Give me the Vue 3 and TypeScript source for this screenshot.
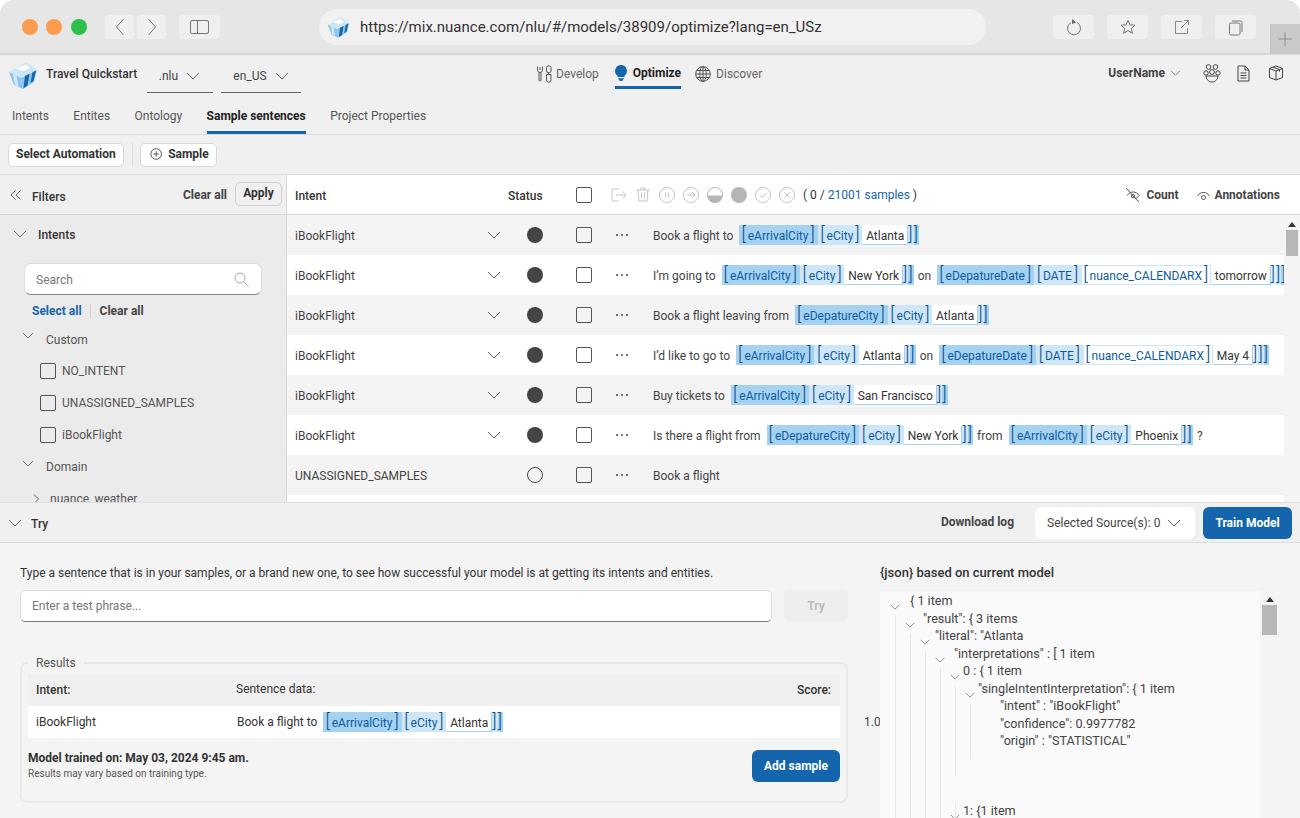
<script setup lang="ts">
interface Tag { labels: string[]; value: string }
type Part = string | Tag
interface Row { intent: string; chev: boolean; status: 'full' | 'empty' | 'none'; parts: Part[] }

const arrive = (v: string): Tag => ({ labels: ['eArrivalCity', 'eCity'], value: v })
const depart = (v: string): Tag => ({ labels: ['eDepatureCity', 'eCity'], value: v })
const date = (v: string): Tag => ({ labels: ['eDepatureDate', 'DATE', 'nuance_CALENDARX'], value: v })

const rows: Row[] = [
  { intent: 'iBookFlight', chev: true, status: 'full', parts: ['Book a flight to', arrive('Atlanta')] },
  { intent: 'iBookFlight', chev: true, status: 'full', parts: ['I’m going to', arrive('New York'), 'on', date('tomorrow')] },
  { intent: 'iBookFlight', chev: true, status: 'full', parts: ['Book a flight leaving from', depart('Atlanta')] },
  { intent: 'iBookFlight', chev: true, status: 'full', parts: ['I’d like to go to', arrive('Atlanta'), 'on', date('May 4')] },
  { intent: 'iBookFlight', chev: true, status: 'full', parts: ['Buy tickets to', arrive('San Francisco')] },
  { intent: 'iBookFlight', chev: true, status: 'full', parts: ['Is there a flight from', depart('New York'), 'from', arrive('Phoenix'), '?'] },
  { intent: 'UNASSIGNED_SAMPLES', chev: false, status: 'empty', parts: ['Book a flight'] },
  { intent: '', chev: false, status: 'none', parts: [] }
]
const resultParts: Part[] = ['Book a flight to', arrive('Atlanta')]
const isTag = (p: Part): p is Tag => typeof p !== 'string'

const tabs = ['Intents', 'Entites', 'Ontology', 'Sample sentences', 'Project Properties']
const customIntents = ['NO_INTENT', 'UNASSIGNED_SAMPLES', 'iBookFlight']

// c = chevron offset in px, t = text offset in px, both from the left of the json box
const jsonLines = [
  { c: 10, t: 30, s: '{ 1 item' },
  { c: 25, t: 43, s: '"result": { 3 items' },
  { c: 40, t: 55, s: '"literal": "Atlanta' },
  { c: 55, t: 74, s: '"interpretations" : [ 1 item' },
  { c: 70, t: 83, s: '0 : { 1 item' },
  { c: 85, t: 98, s: '"singleIntentInterpretation": { 1 item' },
  { c: -1, t: 120, s: '"intent" : "iBookFlight"' },
  { c: -1, t: 120, s: '"confidence": 0.9977782' },
  { c: -1, t: 120, s: '"origin" : "STATISTICAL"' },
  { c: -1, t: 0, s: '' },
  { c: -1, t: 0, s: '' },
  { c: -1, t: 0, s: '' },
  { c: 70, t: 83, s: '1: {1 item' },
  { c: 85, t: 95, s: '"singleIntentInterpretation" : { 1 items' }
]
const guides = [
  { x: 15, y: 24, h: 210 },
  { x: 30, y: 42, h: 192 },
  { x: 45, y: 60, h: 174 },
  { x: 60, y: 77, h: 157 },
  { x: 75, y: 95, h: 90 },
  { x: 90, y: 113, h: 55 },
  { x: 75, y: 212, h: 22 },
  { x: 90, y: 230, h: 4 }
]
</script>

<template>
  <div class="window">
    <svg class="defs" width="0" height="0" aria-hidden="true">
      <symbol id="chev" viewBox="0 0 14 8"><path d="M1 1l6 6 6-6" fill="none" stroke="currentColor" stroke-width="1" /></symbol>
      <symbol id="logo" viewBox="0 0 30 28">
        <path d="M1 11L18 1l11 8-16 8z" fill="#cfe6f7" />
        <path d="M8 7.500l10-4 4 3.500-7 3z" fill="#fff" />
        <path d="M1 11l12 6 2 11-9-4z" fill="#8cc4ec" />
        <path d="M5 13l3.500 1.800 2 11-3.500-1.700z" fill="#d3e9f9" />
        <path d="M13 17l16-8-3 12-11 7z" fill="#8cc4ec" />
        <path d="M17 15l4.500-2.300-2 11.800-4 2.700zM24.500 11.200L28 9.500l-2.500 10.500-3 2z" fill="#1565ad" />
      </symbol>
    </svg>

    <header class="browser">
      <div class="lights"><i class="l o"></i><i class="l o"></i><i class="l g"></i></div>
      <div class="b-btn nav">
        <svg width="10" height="18" viewBox="0 0 10 18"><path d="M8.500 1L1.500 9l7 8" fill="none" stroke="#777" /></svg>
      </div>
      <div class="b-btn nav second">
        <svg width="10" height="18" viewBox="0 0 10 18"><path d="M1.500 1l7 8-7 8" fill="none" stroke="#777" /></svg>
      </div>
      <div class="b-btn side">
        <svg width="20" height="16" viewBox="0 0 20 16"><rect x=".5" y="1.500" width="18" height="13" rx="1.500" fill="none" stroke="#777" /><path d="M7.500 1.500v13" stroke="#777" /></svg>
      </div>
      <div class="url">
        <svg class="fav" width="23" height="24"><use href="#logo" /></svg>
        <span>https://mix.nuance.com/nlu/#/models/38909/optimize?lang=en_USz</span>
      </div>
      <div class="b-btn act">
        <svg width="16" height="18" viewBox="0 0 16 18"><path d="M5 4.500a6.500 6.500 0 1 0 6 0" fill="none" stroke="#777" /><path d="M6 1l4 3.500-4 1.500z" fill="#666" /></svg>
      </div>
      <div class="b-btn act">
        <svg width="16" height="16" viewBox="0 0 16 16"><path d="M8 1.200l2 4.600 5 .4-3.800 3.200 1.200 4.900L8 11.700l-4.400 2.600 1.200-4.900L1 6.200l5-.4z" fill="none" stroke="#777" /></svg>
      </div>
      <div class="b-btn act">
        <svg width="16" height="16" viewBox="0 0 16 16"><path d="M8 2.500H1.500v12h12V9M7 9l7.500-7.500M10 1.500h4.500V6" fill="none" stroke="#888" /></svg>
      </div>
      <div class="b-btn act">
        <svg width="16" height="17" viewBox="0 0 16 17"><rect x="1.500" y="4" width="10.500" height="12" rx="1.500" fill="none" stroke="#777" /><path d="M4 2h8.500A1.500 1.500 0 0 1 14 3.500V13" fill="none" stroke="#777" /></svg>
      </div>
      <div class="plus">
        <svg width="16" height="16" viewBox="0 0 16 16"><path d="M8 1v14M1 8h14" stroke="#8f8f8f" /></svg>
      </div>
    </header>

    <section class="app-head">
      <svg class="app-logo" width="30" height="28"><use href="#logo" /></svg>
      <strong class="proj">Travel Quickstart</strong>
      <div class="dd nlu"><span>.nlu</span><svg class="chev" width="14" height="8"><use href="#chev" /></svg></div>
      <div class="dd lang"><span>en_US</span><svg class="chev" width="14" height="8"><use href="#chev" /></svg></div>
      <nav class="center">
        <div class="nav-item develop">
          <svg width="17" height="18" viewBox="0 0 17 18"><path d="M1.500 1.500v3.500a2.500 2.500 0 0 0 5 0V1.500M4 1v0M3 7.500V15a1 1 0 0 0 2 0V7.500M4 2v3" fill="none" stroke="#555" /><rect x="10.500" y="1" width="4.500" height="6.500" rx="1.500" fill="none" stroke="#555" /><path d="M10.500 9.500H15V15a2.200 2.200 0 0 1-4.500 0zM12.700 7.500v2" fill="none" stroke="#555" /></svg>
          <span>Develop</span>
        </div>
        <div class="nav-item optimize">
          <svg width="12" height="16" viewBox="0 0 12 16"><path d="M6 0a6 6 0 0 1 3.500 10.800V12h-7v-1.200A6 6 0 0 1 6 0z" fill="#1565ad" /><path d="M3 13.300h6v1H8a2 2 0 0 1-4 0H3z" fill="#1565ad" /></svg>
          <b>Optimize</b>
        </div>
        <div class="nav-item discover">
          <svg width="16" height="16" viewBox="0 0 16 16"><g fill="none" stroke="#555"><circle cx="8" cy="8" r="7.300" /><ellipse cx="8" cy="8" rx="3.300" ry="7.300" /><path d="M8 .7v14.600M.7 8h14.600M1.700 4.500h12.600M1.700 11.500h12.600" /></g></svg>
          <span>Discover</span>
        </div>
      </nav>
      <div class="user">
        <b>UserName</b>
        <svg class="chev small" width="11" height="6"><use href="#chev" /></svg>
        <svg class="team" width="18" height="19" viewBox="0 0 18 19"><g fill="none" stroke="#444"><circle cx="5.500" cy="3" r="2.300" /><circle cx="12.500" cy="3" r="2.300" /><circle cx="3" cy="9" r="2.200" /><circle cx="15" cy="9" r="2.200" /><circle cx="9" cy="8" r="2.400" /><path d="M3 12h12c0 3-2.500 6-6 6s-6-3-6-6z" /></g></svg>
        <svg class="doc" width="13" height="17" viewBox="0 0 13 17"><path d="M1 1h7l4 4v11H1zM8 1v4h4M3.500 8h6M3.500 10.500h6M3.500 13h6" fill="none" stroke="#444" /></svg>
        <svg class="box" width="16" height="16" viewBox="0 0 16 16"><path d="M8 1l6.500 2.500v9L8 15l-6.500-2.500v-9zM1.500 3.500L8 6l6.500-2.500M8 6v9M5 2.200l6.500 2.500v2" fill="none" stroke="#444" /></svg>
      </div>
    </section>

    <nav class="tabs">
      <span v-for="t in tabs" :key="t" class="tab" :class="{ on: t === 'Sample sentences' }">{{ t }}</span>
    </nav>

    <div class="toolbar">
      <button class="btn">Select Automation</button>
      <i class="tool-sep"></i>
      <button class="btn sample">
        <svg width="14" height="14" viewBox="0 0 14 14"><circle cx="7" cy="7" r="6" fill="none" stroke="#444" /><path d="M7 3.800v6.400M3.800 7h6.400" stroke="#444" /></svg>
        Sample
      </button>
    </div>

    <main class="main">
      <aside class="filters">
        <div class="f-head">
          <svg width="12" height="10" viewBox="0 0 12 10"><path d="M5.500 .5L1 5l4.500 4.500M10.500 .5L6 5l4.500 4.500" fill="none" stroke="#666" /></svg>
          <span class="f-title">Filters</span>
          <b class="f-clear">Clear all</b>
          <button class="btn apply">Apply</button>
        </div>
        <div class="f-body">
          <div class="f-intents">
            <svg class="chev" width="14" height="8"><use href="#chev" /></svg>
            <span>Intents</span>
          </div>
          <div class="search">
            <span>Search</span>
            <svg width="15" height="15" viewBox="0 0 15 15"><circle cx="6" cy="6" r="5" fill="none" stroke="#aaa" /><path d="M9.700 9.700l4.800 4.800" stroke="#aaa" /></svg>
          </div>
          <div class="sel-row"><b class="blue">Select all</b><i></i><b>Clear all</b></div>
          <div class="group first">
            <svg class="chev" width="12" height="7"><use href="#chev" /></svg>
            <span>Custom</span>
          </div>
          <div v-for="c in customIntents" :key="c" class="f-check">
            <i class="check"></i><span>{{ c }}</span>
          </div>
          <div class="group">
            <svg class="chev" width="12" height="7"><use href="#chev" /></svg>
            <span>Domain</span>
          </div>
          <div class="sub">
            <svg width="6" height="10" viewBox="0 0 6 10"><path d="M1 .5L5.500 5 1 9.500" fill="none" stroke="#666" /></svg>
            <span>nuance_weather</span>
          </div>
        </div>
      </aside>

      <section class="table">
        <div class="t-head">
          <b class="c-intent">Intent</b>
          <b class="c-status">Status</b>
          <i class="check big"></i>
          <div class="t-icons">
            <svg width="16" height="14" viewBox="0 0 16 14"><path d="M8 1H2a1 1 0 0 0-1 1v10a1 1 0 0 0 1 1h6M5 7h10M11.500 3.500L15 7l-3.500 3.500" fill="none" stroke="#c4c4c4" /></svg>
            <svg width="14" height="15" viewBox="0 0 14 15"><path d="M.5 3h13M5 3V1h4v2M2 3l1 11h8l1-11M5.500 5.500v6M8.500 5.500v6" fill="none" stroke="#c4c4c4" /></svg>
            <svg width="16" height="16" viewBox="0 0 16 16"><circle cx="8" cy="8" r="7.500" fill="none" stroke="#c4c4c4" /><path d="M6.500 5.500v5M9.500 5.500v5" stroke="#c4c4c4" /></svg>
            <svg width="16" height="16" viewBox="0 0 16 16"><circle cx="8" cy="8" r="7.500" fill="none" stroke="#c4c4c4" /><path d="M4 8h8M9 5l3 3-3 3" fill="none" stroke="#c4c4c4" /></svg>
            <svg width="16" height="16" viewBox="0 0 16 16"><circle cx="8" cy="8" r="7.500" fill="none" stroke="#b5b5b5" /><path d="M.5 8.500h15A7.500 7.500 0 0 1 .5 8.500z" fill="#b5b5b5" /></svg>
            <svg width="16" height="16" viewBox="0 0 16 16"><circle cx="8" cy="8" r="8" fill="#b5b5b5" /></svg>
            <svg width="16" height="16" viewBox="0 0 16 16"><circle cx="8" cy="8" r="7.500" fill="none" stroke="#c4c4c4" /><path d="M4.500 8.200l2.500 2.500 4.500-5" fill="none" stroke="#c4c4c4" /></svg>
            <svg width="16" height="16" viewBox="0 0 16 16"><circle cx="8" cy="8" r="7.500" fill="none" stroke="#c4c4c4" /><path d="M5.200 5.200l5.600 5.600M10.800 5.200l-5.600 5.600" stroke="#c4c4c4" /></svg>
          </div>
          <span class="count-txt">( 0 / <span class="blue">21001 samples</span> )</span>
          <div class="t-right">
            <svg width="16" height="16" viewBox="0 0 16 16"><path d="M1 1l13 14M2 8.500C4 6 6 5 8 5c2.500 0 4.500 1.300 6 3.500-1 1.500-2.500 2.700-4 3.200" fill="none" stroke="#555" /><circle cx="8" cy="9" r="1.700" fill="none" stroke="#555" /></svg>
            <b>Count</b>
            <svg class="eye" width="13" height="10" viewBox="0 0 13 10"><path d="M.5 5C2 2.500 4 1.500 6.500 1.500S11 2.500 12.500 5" fill="none" stroke="#555" /><circle cx="6.500" cy="6.500" r="2" fill="none" stroke="#555" /></svg>
            <b>Annotations</b>
          </div>
        </div>
        <div class="t-scroll">
          <div class="t-rows">
            <div v-for="(r, i) in rows" :key="i" class="row" :class="{ alt: i % 2 === 0 }">
              <template v-if="r.status !== 'none'">
                <span class="r-intent">{{ r.intent }}</span>
                <span class="r-chev">
                  <svg v-if="r.chev" class="chev" width="14" height="8"><use href="#chev" /></svg>
                </span>
                <i class="dot" :class="r.status"></i>
                <i class="check big"></i>
                <span class="more"><i></i><i></i><i></i></span>
                <div class="sent">
                  <template v-for="(p, j) in r.parts" :key="j">
                    <span v-if="!isTag(p)" class="txt">{{ p }}</span>
                    <span v-else class="tag">
                      <span v-for="(l, k) in p.labels" :key="l" class="lab" :class="'lv' + k"><i>[</i>{{ l }}<i>]</i></span>
                      <span class="val">{{ p.value }}</span>
                      <span v-for="k in p.labels.length" :key="k" class="close" :class="'lv' + (p.labels.length - k)"><i>]</i></span>
                    </span>
                  </template>
                </div>
              </template>
            </div>
          </div>
          <div class="sbar"><i class="up"></i><i class="thumb"></i></div>
        </div>
      </section>
    </main>

    <div class="try-bar">
      <svg class="chev" width="14" height="8"><use href="#chev" /></svg>
      <b class="try-t">Try</b>
      <b class="dl">Download log</b>
      <div class="source"><span>Selected Source(s): 0</span><svg class="chev" width="14" height="8"><use href="#chev" /></svg></div>
      <button class="train">Train Model</button>
    </div>

    <section class="bottom">
      <div class="left">
        <p class="hint">Type a sentence that is in your samples, or a brand new one, to see how successful your model is at getting its intents and entities.</p>
        <div class="try-row">
          <div class="phrase">Enter a test phrase...</div>
          <button class="try-btn">Try</button>
        </div>
        <fieldset class="results">
          <legend>Results</legend>
          <div class="res-head"><b class="rc1">Intent:</b><span class="rc2">Sentence data:</span><b class="rc3">Score:</b></div>
          <div class="res-row">
            <span class="rc1">iBookFlight</span>
            <div class="sent rc2b">
              <template v-for="(p, j) in resultParts" :key="j">
                <span v-if="!isTag(p)" class="txt">{{ p }}</span>
                <span v-else class="tag">
                  <span v-for="(l, k) in p.labels" :key="l" class="lab" :class="'lv' + k"><i>[</i>{{ l }}<i>]</i></span>
                  <span class="val">{{ p.value }}</span>
                  <span v-for="k in p.labels.length" :key="k" class="close" :class="'lv' + (p.labels.length - k)"><i>]</i></span>
                </span>
              </template>
            </div>
          </div>
          <div class="res-foot">
            <div>
              <b class="trained">Model trained on: May 03, 2024 9:45 am.</b>
              <small>Results may vary based on training type.</small>
            </div>
            <button class="add">Add sample</button>
          </div>
        </fieldset>
      </div>
      <span class="score">1.0</span>
      <div class="right">
        <b class="json-t">{json} based on current model</b>
        <div class="json-wrap">
          <div class="json">
            <i v-for="(g, i) in guides" :key="i" class="guide" :style="{ left: g.x + 'px', top: g.y + 'px', height: g.h + 'px' }"></i>
            <div v-for="(l, i) in jsonLines" :key="i" class="j-line">
              <svg v-if="l.c >= 0" class="chev j-chev" width="10" height="6" :style="{ left: l.c + 'px' }"><use href="#chev" /></svg>
              <span :style="{ marginLeft: l.t + 'px' }">{{ l.s }}</span>
            </div>
          </div>
          <div class="sbar j"><i class="up"></i><i class="thumb"></i></div>
        </div>
      </div>
    </section>
  </div>
</template>

<style>
html, body { margin: 0; background: #fff; }
</style>

<style scoped>
* { box-sizing: border-box; }
i { font-style: normal; display: block; }
b { font-weight: 500; }
button { font-family: inherit; cursor: pointer; }
.defs { position: absolute; }
.window {
  width: 1300px; height: 818px; overflow: hidden; display: flex; flex-direction: column;
  border-radius: 14px 14px 0 0; background: #f0f0f0;
  font: 12px/16px Roboto, "Liberation Sans", sans-serif; color: #333;
}
.chev { color: #666; display: block; flex: none; }
.blue { color: #1565ad; }

.browser { height: 55px; flex: none; background: #e6e6e6; border-bottom: 2px solid #d6d6d6; display: flex; align-items: flex-start; padding: 15px 0 0 22px; position: relative; }
.lights { display: flex; gap: 8px; margin-top: 4px; width: 83px; }
.l { width: 16px; height: 16px; border-radius: 50%; }
.l.o { background: #fd9b4f; }
.l.g { background: #2cc14a; }
.l:nth-child(3) { margin-left: 1px; }
.b-btn { height: 24px; background: #efefef; border-radius: 4px; display: flex; align-items: center; justify-content: center; flex: none; }
.nav { width: 29px; }
.nav.second { margin-left: 3px; }
.side { width: 41px; margin-left: 13px; }
.url { width: 667px; height: 36px; margin: -6px 67px 0 99px; border-radius: 18px; background: #f1f1f1; display: flex; align-items: center; padding-left: 8px; font-size: 15px; color: #333; }
.fav { margin-right: 10px; }
.act { width: 41px; margin-right: 13px; }
.plus { position: absolute; right: 0; top: 24px; width: 30px; height: 30px; background: #c9c9c9; display: flex; align-items: center; justify-content: center; }

.app-head { height: 40px; flex: none; display: flex; align-items: center; position: relative; padding-left: 8px; }
.app-logo { margin-right: 8px; }
.proj { font-weight: 500; width: 101px; flex: none; margin-top: -2px; }
.dd { height: 34px; margin-top: 2px; border-bottom: 1px solid #666; display: flex; align-items: center; justify-content: center; gap: 8px; color: #444; flex: none; }
.nlu { width: 66px; margin-right: 8px; padding-right: 1px; }
.lang { width: 80px; }
.center { position: absolute; left: 536px; top: 0; height: 40px; display: flex; }
.nav-item { display: flex; align-items: center; gap: 3px; height: 37px; color: #666; }
.develop { margin-right: 16px; }
.optimize { gap: 6px; border-bottom: 3px solid #1565ad; height: 34px; padding-top: 4px; margin-right: 14px; color: #222; }
.optimize b { font-weight: 700; }
.discover { gap: 5px; }
.user { margin-left: auto; display: flex; align-items: center; height: 36px; margin-top: -4px; margin-right: 16px; color: #444; padding-left: 1px; }
.user b { font-weight: 700; }
.small { margin-left: 5px; }
.team { margin-left: 22px; }
.doc { margin-left: 16px; }
.box { margin-left: 18px; }

.tabs { height: 40px; flex: none; border-bottom: 1px solid #dcdcdc; display: flex; padding-left: 12px; gap: 24.4px; }
.tab { color: #555; height: 39px; padding-top: 13px; border-bottom: 3px solid transparent; }
.tab.on { color: #222; font-weight: 700; border-bottom-color: #1565ad; }

.toolbar { height: 40px; flex: none; border-bottom: 1px solid #dcdcdc; display: flex; align-items: center; padding: 0 8px; }
.btn { height: 24px; background: #fff; border: 1px solid #d8d8d8; border-radius: 5px; padding: 0 7px 2px; font-size: 12px; font-weight: 700; color: #333; display: flex; align-items: center; gap: 6px; }
.tool-sep { width: 1px; height: 24px; background: #dcdcdc; margin: 0 7px 0 8px; }
.sample { width: 77px; padding-left: 9px; }

.main { height: 327px; flex: none; display: flex; overflow: hidden; }
.filters { width: 287px; flex: none; border-right: 1px solid #d8d8d8; display: flex; flex-direction: column; }
.f-head { height: 40px; flex: none; background: #f0f0f0; border-bottom: 1px solid #d8d8d8; display: flex; align-items: center; padding-left: 10px; }
.f-title { margin-left: 10px; font-weight: 500; margin-top: 4px; }
.f-clear { margin-left: auto; font-weight: 700; color: #444; margin-top: 1px; }
.apply { background: #f0f0f0; border-color: #cfcfcf; margin: -2px 4px 0 8px; width: 47px; justify-content: center; padding: 0 0 1px; }
.f-body { flex: 1; background: #ebebeb; padding: 0; overflow: hidden; }
.f-intents { display: flex; align-items: center; height: 38px; padding-left: 13px; }
.f-intents span { margin-left: 11px; font-weight: 500; padding-top: 2px; }
.search { margin: 10px 0 0 24px; width: 238px; height: 32px; background: #fff; border-radius: 7px; border: 1px solid #ddd; border-bottom: 1px solid #888; display: flex; align-items: center; justify-content: space-between; padding: 0 12px 0 11px; color: #777; }
.search span { padding-top: 2px; }
.sel-row { display: flex; align-items: center; height: 30px; padding: 1px 0 0 32px; color: #444; }
.sel-row b { font-weight: 700; }
.sel-row i { width: 1px; height: 14px; background: #cfcfcf; margin: 0 9px 0 8px; }
.group { display: flex; height: 32px; padding: 0 0 0 22px; color: #555; align-items: center; }
.group.first { margin-top: -1px; height: 31px; }
.group .chev { margin-top: -8px; }
.group span { margin-left: 12px; }
.f-check { display: flex; align-items: center; height: 32px; padding-left: 40px; color: #555; }
.f-check span { margin-left: 6px; }
.check { width: 16px; height: 16px; border: 1px solid #555; border-radius: 2px; background: transparent; flex: none; }
.sub { display: flex; align-items: center; height: 32px; padding-left: 33px; color: #555; }
.sub span { margin-left: 11px; }

.table { flex: 1; display: flex; flex-direction: column; background: #fff; min-width: 0; }
.t-head { height: 40px; flex: none; border-bottom: 1px solid #d8d8d8; display: flex; align-items: center; padding-left: 8px; }
.c-intent { width: 213px; padding-top: 2px; }
.c-status { width: 68px; padding-top: 2px; }
.t-icons { display: flex; align-items: center; gap: 8px; margin-left: 19px; width: 192px; flex: none; }
.t-icons svg:nth-child(2) { margin-left: 1px; margin-right: 1px; }
.count-txt { color: #333; }
.t-right { margin-left: auto; display: flex; align-items: center; margin-right: 20px; color: #444; margin-top: 1px; }
.t-right b { font-weight: 700; margin-left: 5px; }
.eye { margin-left: 18px; margin-top: 2px; }
.t-scroll { flex: 1; display: flex; min-height: 0; background: #f4f4f4; }
.t-rows { width: 997px; flex: none; overflow: hidden; }
.row { height: 40px; display: flex; align-items: center; padding-left: 8px; background: #fff; overflow: hidden; }
.row.alt { background: #f4f4f4; }
.r-intent { width: 192px; flex: none; color: #444; padding-top: 2px; }
.r-chev { width: 40px; flex: none; }
.dot { width: 16px; height: 16px; border-radius: 50%; flex: none; }
.dot.full { background: #444; }
.dot.empty { border: 1px solid #444; }
.row .check { margin-left: 33px; }
.more { width: 61px; padding-left: 24px; flex: none; display: flex; gap: 3px; }
.more i { width: 2px; height: 2px; background: #444; border-radius: 50%; }
.t-head .check { margin-left: 0; }
.sent { display: flex; align-items: center; white-space: nowrap; color: #444; }
.txt { flex: none; padding-top: 2px; }
.tag { display: flex; height: 20px; margin: 0 4px 0 6px; flex: none; background: #a6d2f2; }
.lab, .close, .val { display: flex; align-items: center; height: 20px; color: #0b5c9e; flex: none; }
.lab { padding: 2px 2px 0; }
.lab.lv1, .lab.lv2 { padding: 2px 2.500px 0; }
.lab i, .close i { font-size: 18px; font-weight: 300; color: #0b4f8c; line-height: 20px; margin-top: -4px; }
.close i { margin-top: -2px; }
.lab i:first-child { margin-right: 2px; }
.lab i:last-child { margin-left: 2px; }
.lv0 { background: #a6d2f2; }
.lv1 { background: #cfe6f7; }
.lv2 { background: #e6f3fb; }
.lab.lv2 { background: #fff; box-shadow: inset 0 0 0 1px #cfe6f7; }
.lab.lv0 { margin-right: 1px; }
.val { background: #fff; color: #333; border: 1px solid #a6d2f2; border-left-color: #fff; border-top-color: #fff; padding: 1px 3px 0; }
.close { padding: 0 1px 0 0; }
.sbar { flex: 1; position: relative; }
.up { width: 0; height: 0; border: 4px solid transparent; border-top: 0; border-bottom: 5px solid #333; margin: 7px 0 0 4px; }
.thumb { width: 12px; height: 26px; background: #b7b7b7; margin: 3px 0 0 2px; }

.try-bar { height: 41px; flex: none; background: #f0f0f0; border-top: 1px solid #dedede; border-bottom: 1px solid #dcdcdc; display: flex; align-items: center; padding: 1px 8px 0; }
.try-t { margin-left: 9px; font-weight: 500; padding-top: 2px; }
.dl { margin-left: auto; font-weight: 700; color: #444; margin-top: -3px; }
.source { width: 160px; height: 32px; margin-left: 21px; background: #fff; border-radius: 6px; display: flex; align-items: center; justify-content: space-between; padding: 0 14px 0 12px; color: #444; }
.train { width: 89px; height: 32px; margin-left: 8px; background: #1565ad; color: #fff; border: 0; border-radius: 6px; font-size: 12px; font-weight: 700; }

.bottom { flex: 1; min-height: 0; background: #f4f4f4; display: flex; overflow: hidden; padding-left: 20px; }
.left { width: 828px; flex: none; }
.hint { margin: 22px 0 0; color: #333; }
.try-row { display: flex; margin-top: 9px; gap: 12px; }
.phrase { flex: 1; height: 32px; background: #fff; border-radius: 5px; border: 1px solid #ddd; border-bottom: 1px solid #777; padding: 7px 11px; color: #777; }
.try-btn { width: 64px; height: 32px; background: #eee; color: #bbb; border: 0; border-radius: 5px; font-size: 12px; font-weight: 700; }
.results { margin: 33px 0 0; padding: 3px 6px 0; height: 148px; border: 2px solid #e8e8e8; border-radius: 7px; }
legend { margin-left: 0; padding: 0 8px; color: #555; }
.res-head { display: flex; height: 32px; background: #f0f0f0; align-items: center; padding: 0 8px; }
.res-row { display: flex; height: 32px; background: #fff; align-items: center; padding: 0 8px; color: #333; }
.rc1 { width: 200px; flex: none; }
.rc2 { flex: 1; margin-top: -3px; color: #333; }
.rc3 { font-weight: 500; margin-right: 1px; }
.rc2b { color: #333; margin-left: 1px; }
.res-row .txt { padding-top: 0; }
.res-foot { display: flex; justify-content: space-between; margin-top: 11px; }
.trained { display: block; font-weight: 700; color: #333; margin-top: 1px; }
small { display: block; font-size: 10px; line-height: 13px; color: #555; margin-top: 1px; }
.add { width: 88px; height: 32px; margin-top: 1px; background: #1565ad; color: #fff; border: 0; border-radius: 6px; font-size: 12px; font-weight: 700; }
.score { width: 32px; flex: none; padding: 171px 0 0 16px; font-size: 12px; color: #444; }
.right { flex: 1; min-width: 0; }
.json-t { display: block; margin-top: 22px; font-weight: 500; font-size: 13px; }
.json-wrap { display: flex; margin-top: 10px; }
.json { width: 380px; flex: none; height: 240px; background: #fafafa; position: relative; padding-top: 1px; overflow: hidden; }
.j-line { height: 17.5px; line-height: 17px; position: relative; white-space: nowrap; color: #444; display: flex; font-size: 12.6px; }
.j-chev { position: absolute; top: 12px; }
.guide { position: absolute; width: 1px; background: #e8e8e8; }
.sbar.j { padding-left: 1px; }
.sbar.j .up { margin: 6px 0 0 5px; }
.sbar.j .thumb { width: 15px; height: 30px; margin: 3px 0 0 1px; }
</style>
